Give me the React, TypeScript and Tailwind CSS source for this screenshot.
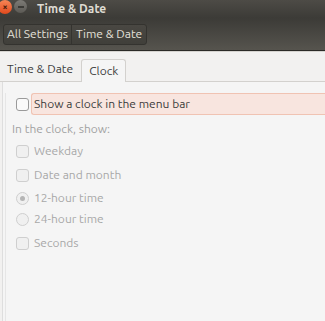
import React from "react";

const font = { fontFamily: "Ubuntu, 'Open Sans', 'Noto Sans', sans-serif" };

function Check({ dim = false }: { dim?: boolean }) {
  return (
    <span
      className={`inline-block w-[13px] h-[13px] rounded-[3px] border shrink-0 ${
        dim ? "border-[#cfcfcf] bg-[#f0f0f0]" : "border-[#9a9a9a] bg-[#fafafa]"
      }`}
    />
  );
}

function Radio({ on = false }: { on?: boolean }) {
  return (
    <span className="flex items-center justify-center w-[13px] h-[13px] rounded-full border border-[#cfcfcf] bg-[#f0f0f0] shrink-0">
      {on && <span className="w-[5px] h-[5px] rounded-full bg-[#b5b5b5]" />}
    </span>
  );
}

function Option({ label, kind, on, h = "h-[24px]" }: { label: string; kind: "check" | "radio"; on?: boolean; h?: string }) {
  return (
    <div className={`flex items-center gap-[5px] pl-[10px] ${h} text-[12px] text-[#a8a8a8]`}>
      {kind === "check" ? <Check dim /> : <Radio on={on} />}
      <span>{label}</span>
    </div>
  );
}

export default function App() {
  return (
    <div className="w-[325px] h-[321px] overflow-hidden bg-[#f2f1f0] flex flex-col" style={font}>
      {/* Title bar */}
      <div className="h-[18px] shrink-0 bg-gradient-to-b from-[#4d4b46] to-[#3c3b37] flex items-center relative">
        <span className="absolute left-[-2px] top-[0px] w-[14px] h-[14px] rounded-full bg-gradient-to-b from-[#f78555] to-[#e0481a] flex items-center justify-center text-[9px] leading-none text-[#4a1e0c] font-bold">
          ×
        </span>
        <span className="absolute left-[14px] top-[0px] w-[13px] h-[13px] rounded-full bg-gradient-to-b from-[#7d7b76] to-[#5c5a55] flex items-center justify-center">
          <span className="w-[6px] h-[2px] bg-[#3c3b37]" />
        </span>
        <span className="ml-[37px] text-[12px] font-bold text-[#dfdbd2] leading-none">Time &amp; Date</span>
      </div>

      {/* Toolbar */}
      <div className="h-[33px] shrink-0 bg-gradient-to-b from-[#3c3b37] to-[#56544e] border-b border-[#2b2a27] flex items-center pl-[3px]">
        <div className="flex h-[21px] rounded-[3px] border border-[#34332f] bg-gradient-to-b from-[#4a4843] to-[#403f3a] text-[12px] text-[#e4e1da]">
          <span className="px-[3px] flex items-center border-r border-[#34332f]">All Settings</span>
          <span className="px-[4px] flex items-center">Time &amp; Date</span>
        </div>
      </div>
      <div className="h-[1px] shrink-0 bg-[#d6d4d0]" />

      {/* Tabs */}
      <div className="flex items-end h-[30px] shrink-0 pl-[1px] border-b border-[#d3d1ce] text-[12px] text-[#3c3c3c]">
        <span className="px-[6px] pb-[3px]">Time &amp; Date</span>
        <span className="ml-[2px] px-[7px] h-[23px] flex items-center bg-[#f5f5f5] border border-b-0 border-[#d3d1ce] rounded-t-[3px] mb-[-1px]">
          Clock
        </span>
      </div>

      {/* Content */}
      <div className="flex-1 bg-[#f5f5f5] ml-[2px] border-l border-[#dedede] pl-[2px]">
        <div className="border-l border-[#e6e6e6] h-full">
          <div className="flex items-center mt-[11px] pl-[10px] gap-[2px]">
            <Check />
            <span className="flex-1 h-[22px] flex items-center pl-[2px] bg-[#f8e5df] border border-r-0 border-[#f0c3b3] rounded-l-[3px] text-[12px] text-[#3c3c3c]">
              Show a clock in the menu bar
            </span>
          </div>
          <div className="pl-[6px] mt-[4px] h-[20px] flex items-center text-[12px] text-[#a2a2a2]">In the clock, show:</div>
          <Option label="Weekday" kind="check" />
          <Option label="Date and month" kind="check" />
          <Option label="12-hour time" kind="radio" on h="h-[22px]" />
          <Option label="24-hour time" kind="radio" h="h-[20px]" />
          <div className="mt-[2px]">
            <Option label="Seconds" kind="check" />
          </div>
        </div>
      </div>
    </div>
  );
}
